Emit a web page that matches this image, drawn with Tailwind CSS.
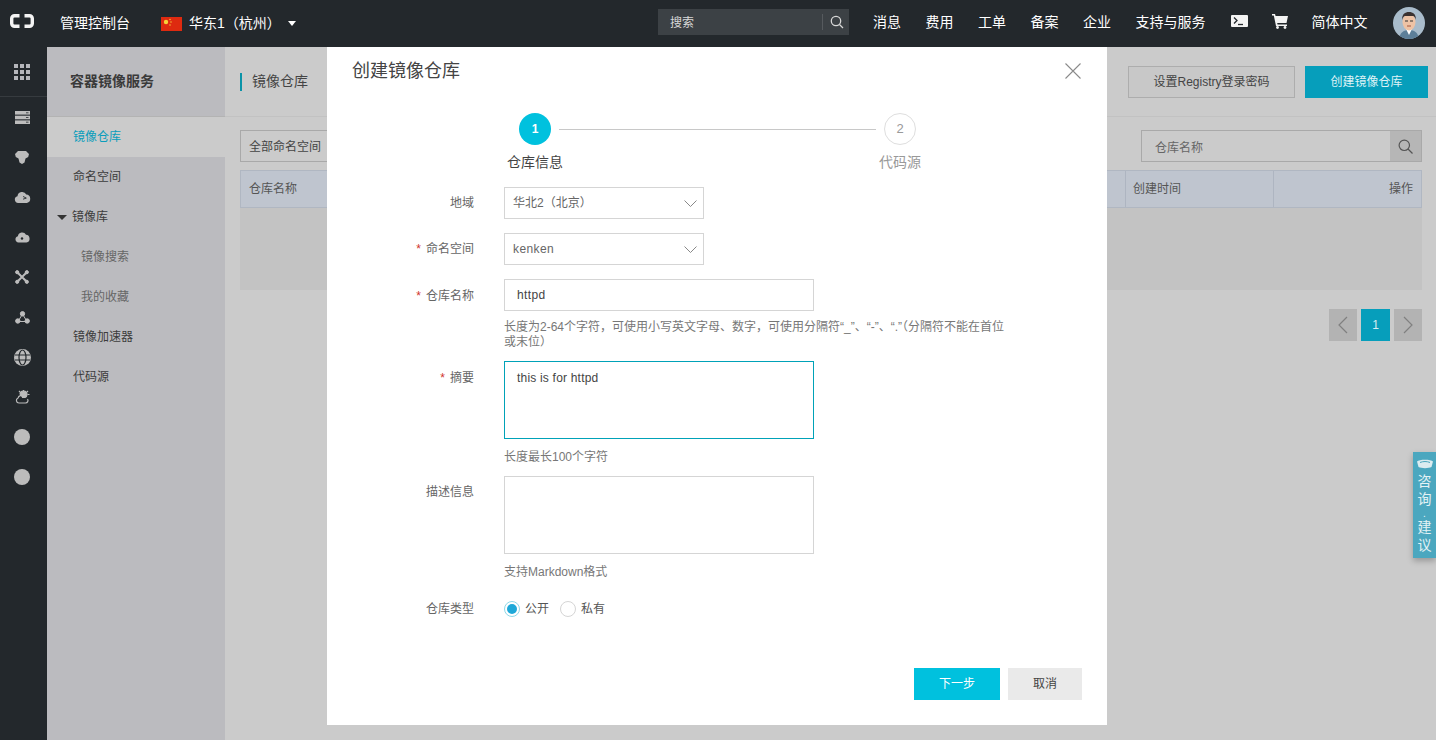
<!DOCTYPE html>
<html lang="zh-CN">
<head>
<meta charset="utf-8">
<script src="https://cdn.jsdelivr.net/npm/@tailwindcss/browser@4"></script>
<title>创建镜像仓库</title>
</head>
<body class="font-['Liberation_Sans','Noto_Sans_CJK_SC',sans-serif] text-[12px] bg-[#cbcbcb]">
<div class="relative w-[1436px] h-[740px] overflow-hidden bg-[#cbcbcb] flex flex-col">
  <!-- top bar -->
  <header class="h-[47px] shrink-0 bg-[#23282c] flex items-center text-white text-[14px]">
    <svg class="ml-[10px] w-[24px] h-[14px] mb-[6px]" viewBox="0 0 24 14" fill="none" stroke="#f4f4f4" stroke-width="3.400"><path d="M9.500 1.700H4.500a2.800 2.800 0 0 0-2.800 2.800v5a2.800 2.800 0 0 0 2.800 2.800h5M14.500 1.700h5a2.800 2.800 0 0 1 2.800 2.800v5a2.800 2.800 0 0 1-2.800 2.800h-5"/></svg>
    <span class="ml-[26px] w-[71px] whitespace-nowrap mb-[1px]">管理控制台</span>
    <svg class="ml-[30px] w-[21px] h-[14px]" viewBox="0 0 21 14"><rect width="21" height="14" fill="#de2a10"/><circle cx="5" cy="5" r="2.200" fill="#f6d33a"/><circle cx="9" cy="2.500" r=".7" fill="#f6d33a"/><circle cx="10" cy="5" r=".7" fill="#f6d33a"/><circle cx="9" cy="8" r=".7" fill="#f6d33a"/></svg>
    <span class="ml-[7px] w-[96px] whitespace-nowrap">华东1（杭州）</span>
    <span class="ml-[3px] w-0 h-0 border-x-[4px] border-x-transparent border-t-[5px] border-t-white"></span>
    <div class="ml-[362px] w-[191px] h-[26px] mb-[3px] bg-[#3c4145] flex items-center text-[12px] text-[#d8d8d8]">
      <span class="ml-[12px] w-[152px] pt-[1px]">搜索</span>
      <span class="w-px h-[16px] bg-[#565a5e]"></span>
      <svg class="ml-[7px] w-[14px] h-[14px]" viewBox="0 0 14 14" fill="none" stroke="#d8d8d8" stroke-width="1.300"><circle cx="6" cy="6" r="4.700"/><path d="M9.500 9.500L13 13"/></svg>
    </div>
    <nav class="ml-[24px] mb-[2px] flex items-center gap-[24.5px] whitespace-nowrap">
      <span>消息</span><span>费用</span><span>工单</span><span>备案</span><span>企业</span><span>支持与服务</span>
    </nav>
    <svg class="ml-[25px] w-[17px] h-[12px] mb-[5px]" viewBox="0 0 17 12"><rect width="17" height="12" rx="1" fill="#f4f4f4"/><path d="M3 2.500l3 3-3 3" fill="none" stroke="#23282c" stroke-width="1.300"/><path d="M7 9.500h5" stroke="#23282c" stroke-width="1.300"/></svg>
    <svg class="ml-[24px] w-[16px] h-[15px] mb-[5px]" viewBox="0 0 16 15" fill="#f4f4f4"><path d="M0 0h3l.6 2H16l-1.500 7H5.200l.3 1.500H15V12H4L1.800 1.500H0z"/><circle cx="5.500" cy="13.500" r="1.400"/><circle cx="13" cy="13.500" r="1.400"/></svg>
    <span class="ml-[24px] w-[58px] whitespace-nowrap mb-[2px]">简体中文</span>
    <div class="ml-[23px] w-[32px] h-[32px] rounded-full overflow-hidden bg-[#a9bccb] mb-[1px]">
      <svg viewBox="0 0 32 32" class="w-full h-full"><path d="M6 32c1-7 5-9 10-9s9 2 10 9z" fill="#5d7f99"/><path d="M13 22h6l-3 6z" fill="#fff"/><ellipse cx="16" cy="15" rx="6.500" ry="8.500" fill="#eec3a5"/><path d="M9 13c0-6 3-8 7-8s7 2 7 8c-1-3-2-4-3-4H12c-1 0-2 1-3 4z" fill="#3b3230"/><path d="M12 14h3M17 14h3" stroke="#333" stroke-width="1"/><path d="M14 19h4" stroke="#a4563f" stroke-width="1"/></svg>
    </div>
  </header>

  <div class="flex flex-1 min-h-0">
    <!-- icon rail -->
    <aside class="w-[47px] shrink-0 bg-[#23282c] flex flex-col items-center text-[#bcbcbc]">
      <div class="h-[50px] w-full flex items-center justify-center pr-[3px] border-b border-[#363b3f]">
        <svg class="w-[16px] h-[16px]" viewBox="0 0 16 16" fill="#b5b6bb"><rect width="4" height="4"/><rect x="6" width="4" height="4"/><rect x="12" width="4" height="4"/><rect y="6" width="4" height="4"/><rect x="6" y="6" width="4" height="4"/><rect x="12" y="6" width="4" height="4"/><rect y="12" width="4" height="4"/><rect x="6" y="12" width="4" height="4"/><rect x="12" y="12" width="4" height="4"/></svg>
      </div>
      <div class="h-[40px] flex items-center pr-[3px]"><svg class="w-[15px] h-[13px]" viewBox="0 0 15 13" fill="#bcbcbc"><rect width="15" height="3.600"/><rect y="4.700" width="15" height="3.600"/><rect y="9.400" width="15" height="3.600"/><path d="M11 1.800h2.500M11 6.500h2.500M11 11.200h2.500" stroke="#23282c" stroke-width=".8"/></svg></div>
      <div class="h-[40px] flex items-center pr-[3px]"><svg class="w-[14px] h-[13px]" viewBox="0 0 14 13" fill="#bcbcbc"><path d="M0 3l3-3h8l3 3-.8 3-2.700 1.500-1 4-2.500 1.500-2.500-1.500-1-4L.8 6z"/></svg></div>
      <div class="h-[40px] flex items-center pr-[3px]"><svg class="w-[17px] h-[12px]" viewBox="0 0 15 11" fill="#bcbcbc"><path d="M3.500 11a3.200 3.200 0 0 1-.6-6.300A4.300 4.300 0 0 1 11 3.300 3.900 3.900 0 0 1 11.500 11z"/><path d="M8 5l3 1.500L8 7.500" fill="none" stroke="#23282c" stroke-width=".8"/></svg></div>
      <div class="h-[40px] flex items-center pr-[3px]"><svg class="w-[15px] h-[12px]" viewBox="0 0 15 11" fill="#bcbcbc"><path d="M3.500 11a3.200 3.200 0 0 1-.6-6.300A4.300 4.300 0 0 1 11 3.300 3.900 3.900 0 0 1 11.500 11z"/><circle cx="7" cy="7" r="1.200" fill="#23282c"/></svg></div>
      <div class="h-[40px] flex items-center pr-[3px]"><svg class="w-[14px] h-[14px]" viewBox="0 0 14 14" fill="#bcbcbc" stroke="#bcbcbc"><path d="M2.500 2.500l9 9M11.500 2.500l-9 9" stroke-width="2"/><circle cx="2.200" cy="2.200" r="1.600"/><circle cx="11.800" cy="2.200" r="1.600"/><circle cx="2.200" cy="11.800" r="1.600"/><circle cx="11.800" cy="11.800" r="1.600"/></svg></div>
      <div class="h-[40px] flex items-center pr-[3px]"><svg class="w-[15px] h-[13px]" viewBox="0 0 15 13" fill="#bcbcbc" stroke="#bcbcbc"><path d="M7.500 3L3 10.500h9z" fill="none" stroke-width="1"/><circle cx="7.500" cy="2.800" r="2.200"/><circle cx="2.800" cy="10" r="2.200"/><circle cx="12.200" cy="10" r="2.200"/></svg></div>
      <div class="h-[40px] flex items-center pr-[3px]"><svg class="w-[17px] h-[17px]" viewBox="0 0 17 17" fill="none" stroke="#23282c"><circle cx="8.500" cy="8.500" r="8.500" fill="#bcbcbc" stroke="none"/><ellipse cx="8.500" cy="8.500" rx="3.500" ry="7.500" stroke-width="1.200"/><path d="M1 6h15M1 11h15" stroke-width="1.200"/></svg></div>
      <div class="h-[40px] flex items-center pr-[3px]"><svg class="w-[16px] h-[14px]" viewBox="0 0 16 14" fill="none" stroke="#bcbcbc" stroke-width="1.200"><path d="M5 13a2.600 2.600 0 0 1-1-5 3.300 3.300 0 0 1 5.500-1.500"/><path d="M5 13h6.500a2.500 2.500 0 0 0 2-4"/><path d="M6 4.500a3.500 3.500 0 0 1 7 0c0 1.500-1 2.500-2 3H8" fill="#bcbcbc"/><path d="M9.500 0v1M15.500 4.500h-2M14 1l-1 1M5 1l1 1"/></svg></div>
      <div class="h-[40px] flex items-center pr-[3px]"><span class="block w-[16px] h-[16px] rounded-full bg-[#bcbcbc]"></span></div>
      <div class="h-[40px] flex items-center pr-[3px]"><span class="block w-[16px] h-[16px] rounded-full bg-[#bcbcbc]"></span></div>
    </aside>

    <!-- sidebar -->
    <aside class="w-[178px] shrink-0 bg-[#bbbbbf] text-[#3c3c3c]">
      <div class="h-[70px] flex items-center pl-[23px] text-[14px] font-bold text-[#3a3a3a] pb-[1px] border-b border-[#b3b3b3]">容器镜像服务</div>
      <div class="h-[40px] flex items-center pl-[26px] bg-[#cbcbcb] text-[#0a9dbb]">镜像仓库</div>
      <div class="h-[40px] flex items-center pl-[26px]">命名空间</div>
      <div class="h-[40px] flex items-center pl-[10px]"><span class="w-0 h-0 border-x-[5px] border-x-transparent border-t-[5px] border-t-[#333]"></span><span class="ml-[5px]">镜像库</span></div>
      <div class="h-[40px] flex items-center pl-[34px] text-[#666]">镜像搜索</div>
      <div class="h-[40px] flex items-center pl-[34px] text-[#666]">我的收藏</div>
      <div class="h-[40px] flex items-center pl-[26px]">镜像加速器</div>
      <div class="h-[40px] flex items-center pl-[26px]">代码源</div>
    </aside>

    <!-- main -->
    <main class="flex-1 min-w-0 text-[#555]">
      <div class="h-[70px] flex items-center border-b border-[#c2c2c2] pl-[15px] pr-[8px]">
        <span class="w-[2px] h-[18px] bg-[#0a93a8]"></span>
        <span class="ml-[10px] text-[14px] text-[#444] pb-[1px]">镜像仓库</span>
        <span class="ml-auto mt-[1px] w-[167px] h-[32px] border border-[#adadad] bg-[#c8c8c8] flex items-center justify-center text-[#444]">设置Registry登录密码</span>
        <span class="ml-[10px] mt-[1px] w-[123px] h-[32px] bg-[#069ebb] flex items-center justify-center text-[#dff3f7]">创建镜像仓库</span>
      </div>
      <div class="pl-[15px] pr-[14px]">
        <div class="mt-[13px] h-[32px] flex justify-between">
          <div class="w-[100px] h-[32px] border border-[#a9a9a9] bg-[#cbcbcb] flex items-center pl-[8px] pt-[1px] text-[#444]">全部命名空间</div>
          <div class="w-[281px] h-[32px] border border-[#a9a9a9] flex items-center">
            <span class="pl-[13px] pt-[3px] flex-1 text-[#666]">仓库名称</span>
            <span class="w-[31px] h-full bg-[#b6b6b6] flex items-center justify-center"><svg class="w-[15px] h-[15px]" viewBox="0 0 15 15" fill="none" stroke="#555" stroke-width="1.200"><circle cx="6.300" cy="6.300" r="5.200"/><path d="M10 10l4.500 4.500"/></svg></span>
          </div>
        </div>
        <div class="mt-[8px] h-[38px] bg-[#bfc5cf] border border-[#b0b7c2] flex items-center text-[#555]">
          <span class="pl-[8px] flex-1">仓库名称</span>
          <span class="w-[148px] h-full border-l border-[#aeb5c1] flex items-center pl-[7px]">创建时间</span>
          <span class="w-[148px] h-full border-l border-[#aeb5c1] flex items-center justify-end pr-[8px]">操作</span>
        </div>
        <div class="h-[82px] bg-[#c3c3c3]"></div>
        <div class="mt-[19px] flex justify-end gap-[4px]">
          <span class="w-[28px] h-[32px] bg-[#b3b3b3] flex items-center justify-center"><svg class="w-[10px] h-[18px]" viewBox="0 0 10 18" fill="none" stroke="#808080" stroke-width="1.200"><path d="M9 1L1 9l8 8"/></svg></span>
          <span class="w-[29px] h-[32px] bg-[#069ebb] flex items-center justify-center text-[#d7eef3]">1</span>
          <span class="w-[28px] h-[32px] bg-[#b3b3b3] flex items-center justify-center"><svg class="w-[10px] h-[18px]" viewBox="0 0 10 18" fill="none" stroke="#808080" stroke-width="1.200"><path d="M1 1l8 8-8 8"/></svg></span>
        </div>
      </div>
    </main>
  </div>

  <!-- floating tab -->
  <div class="absolute left-[1413px] top-[452px] w-[23px] h-[106px] bg-[#4ba7bf] shadow-[0_3px_6px_rgba(0,0,0,.25)] flex flex-col items-center text-[14px] leading-[17.5px] text-[#e3f2f5]">
    <svg class="mt-[6px] w-[18px] h-[11px] shrink-0" viewBox="0 0 18 11"><path d="M1 3.500C3 1 15 1 17 3.500L15.500 9c-3 1.500-10 1.500-13 0z" fill="#dcecf0"/><path d="M4 4.500c3-1.300 7-1.300 10 0" stroke="#4ba7bf" fill="none"/></svg>
    <span class="mt-[4px]">咨</span><span>询</span><span class="h-[11px] leading-[11px] text-[10px]">.</span><span>建</span><span>议</span>
  </div>

  <!-- modal -->
  <section class="absolute left-[327px] top-[47px] w-[780px] h-[678px] bg-white text-[#666]">
    <div class="h-[47px] flex items-center pl-[25px] pr-[26px] text-[18px] text-[#444]">
      <h2 class="pt-[1px]">创建镜像仓库</h2>
      <svg class="ml-auto mt-[1px] w-[16px] h-[16px]" viewBox="0 0 16 16" fill="none" stroke="#8a8a8a" stroke-width="1.100"><path d="M.5.500l15 15M15.500.500l-15 15"/></svg>
    </div>

    <!-- steps -->
    <div class="mt-[19px] ml-[180px] w-[414px] relative h-[60px]">
      <div class="flex items-center">
        <span class="ml-[12px] w-[32px] h-[32px] rounded-full bg-[#00c1de] text-white font-bold flex items-center justify-center">1</span>
        <span class="mx-[8px] w-[317px] h-px bg-[#c8c8c8]"></span>
        <span class="w-[32px] h-[32px] rounded-full border border-[#dedede] text-[#999] text-[13px] flex items-center justify-center">2</span>
      </div>
      <div class="mt-[7px] flex justify-between text-[14px] leading-[20px]">
        <span class="text-[#444]">仓库信息</span>
        <span class="text-[#999]">代码源</span>
      </div>
    </div>

    <!-- form -->
    <form class="mt-[14px]">
      <div class="h-[32px] flex items-center">
        <label class="w-[147px] text-right">地域</label>
        <div class="ml-[30px] w-[200px] h-[32px] border border-[#d5d5d5] flex items-center pl-[8px] pr-[6px]"><span class="flex-1">华北2（北京）</span><svg class="w-[13px] h-[7px]" viewBox="0 0 13 7" fill="none" stroke="#888"><path d="M.5.500l6 6 6-6"/></svg></div>
      </div>
      <div class="mt-[14px] h-[32px] flex items-center">
        <label class="w-[147px] text-right"><span class="text-[#d0342c] mr-[5px]">*</span>命名空间</label>
        <div class="ml-[30px] w-[200px] h-[32px] border border-[#d5d5d5] flex items-center pl-[8px] pr-[6px]"><span class="flex-1 tracking-[.4px]">kenken</span><svg class="w-[13px] h-[7px]" viewBox="0 0 13 7" fill="none" stroke="#888"><path d="M.5.500l6 6 6-6"/></svg></div>
      </div>
      <div class="mt-[14px] flex items-start">
        <label class="w-[147px] text-right pt-[8px] leading-[18px]"><span class="text-[#d0342c] mr-[5px]">*</span>仓库名称</label>
        <div class="ml-[30px] w-[510px]">
          <div class="w-[310px] h-[32px] border border-[#d5d5d5] flex items-center pl-[12px] text-[#444] tracking-[.4px]">httpd</div>
          <p class="mt-[8px] leading-[15px] pt-[1px] text-[#777]">长度为2-64个字符，可使用小写英文字母、数字，可使用分隔符“_”、“-”、“.”（分隔符不能在首位或末位）</p>
        </div>
      </div>
      <div class="mt-[11px] flex items-start">
        <label class="w-[147px] text-right pt-[8px] leading-[18px]"><span class="text-[#d0342c] mr-[5px]">*</span>摘要</label>
        <div class="ml-[30px]">
          <div class="w-[310px] h-[78px] border border-[#00a2b8] pl-[12px] pt-[7px] leading-[18px] text-[#444] tracking-[.2px]">this is for httpd</div>
          <p class="mt-[9px] leading-[18px] text-[#777]">长度最长100个字符</p>
        </div>
      </div>
      <div class="mt-[10px] flex items-start">
        <label class="w-[147px] text-right pt-[7px] leading-[18px]">描述信息</label>
        <div class="ml-[30px]">
          <div class="w-[310px] h-[78px] border border-[#d5d5d5]"></div>
          <p class="mt-[9px] leading-[18px] text-[#777]">支持Markdown格式</p>
        </div>
      </div>
      <div class="mt-[19px] h-[18px] flex items-center">
        <label class="w-[147px] text-right">仓库类型</label>
        <div class="ml-[30px] flex items-center text-[#555]">
          <span class="w-[16px] h-[16px] rounded-full border border-[#8fd8e8] flex items-center justify-center"><span class="w-[10px] h-[10px] rounded-full bg-[#1ea8d8]"></span></span>
          <span class="ml-[5px]">公开</span>
          <span class="ml-[11px] w-[16px] h-[16px] rounded-full border border-[#d5d5d5]"></span>
          <span class="ml-[5px]">私有</span>
        </div>
      </div>
    </form>

    <div class="absolute right-[25px] bottom-[25px] flex gap-[8px]">
      <button class="w-[86px] h-[32px] bg-[#00c1de] text-white">下一步</button>
      <button class="w-[74px] h-[32px] bg-[#eaeaea] text-[#444]">取消</button>
    </div>
  </section>
</div>
</body>
</html>
